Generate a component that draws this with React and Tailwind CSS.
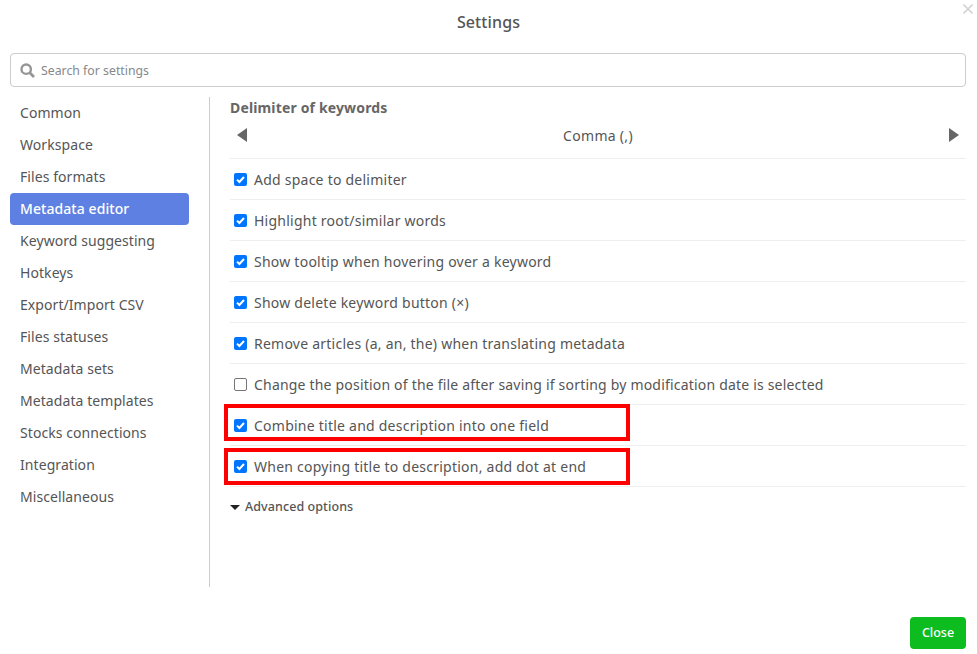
import React from "react";

const menu = ["Common","Workspace","Files formats","Metadata editor","Keyword suggesting","Hotkeys","Export/Import CSV","Files statuses","Metadata sets","Metadata templates","Stocks connections","Integration","Miscellaneous"];
const rows = [
  ["Add space to delimiter", true],
  ["Highlight root/similar words", true],
  ["Show tooltip when hovering over a keyword", true],
  ["Show delete keyword button (×)", true],
  ["Remove articles (a, an, the) when translating metadata", true],
  ["Change the position of the file after saving if sorting by modification date is selected", false],
  ["Combine title and description into one field", true],
  ["When copying title to description, add dot at end", true],
];

function Check({ on }) {
  if (!on) return <span className="w-[13px] h-[13px] rounded-[2px] border border-[#767676] bg-white shrink-0" />;
  return (
    <span className="w-[13px] h-[13px] rounded-[2px] bg-[#0075ff] shrink-0 flex items-center justify-center">
      <svg width="11" height="11" viewBox="0 0 11 11"><path d="M2 5.6 L4.4 8 L9 3" fill="none" stroke="#fff" strokeWidth="2" /></svg>
    </span>
  );
}

export default function App() {
  return (
    <div className="relative w-[977px] h-[654px] bg-white overflow-hidden text-[#555] text-[14px] [font-family:'Noto_Sans',sans-serif]">
      <svg className="absolute left-[963px] top-[4px]" width="10" height="10" viewBox="0 0 10 10"><path d="M0.5 0.5 L9.5 9.5 M9.5 0.5 L0.5 9.5" stroke="#d4d4d4" strokeWidth="1.6" /></svg>
      <div className="h-[53px] pt-[10px] text-center text-[16px] leading-[24px] font-medium tracking-[0.12px] text-[#555]">Settings</div>
      <div className="mx-[10px] w-[956px] h-[34px] border border-[#ccc] rounded-[4px] flex items-center pl-[9px] gap-[6px]">
        <svg width="15" height="15" viewBox="0 0 15 15"><circle cx="6.2" cy="6.2" r="4.7" fill="none" stroke="#969696" strokeWidth="2.4" /><path d="M9.8 9.8 L14 14" stroke="#969696" strokeWidth="2.8" /></svg>
        <span className="text-[12.3px] text-[#888] relative top-px">Search for settings</span>
      </div>
      <div className="flex mt-[10px] pl-[10px]">
        <div className="w-[179px]">
          {menu.map((m) => (
            <div key={m} className={"h-[32px] pl-[10px] pb-[2px] flex items-center rounded-[4px] text-[14px] tracking-[0.07px] " + (m === "Metadata editor" ? "bg-[#5e80e2] text-white font-medium" : "text-[#555]")}>{m}</div>
          ))}
        </div>
        <div className="ml-[20px] w-px h-[490px] bg-[#ccc]" />
        <div className="ml-[20px] w-[736px]">
          <div className="h-[21px] leading-[21px] text-[14px] font-bold tracking-[0.15px] text-[#666]">Delimiter of keywords</div>
          <div className="h-[41px] border-b border-[#eee] flex items-center justify-between pl-[7px] pr-[7px] pb-[6px]">
            <svg width="10" height="14" viewBox="0 0 10 14"><path d="M10 0 V14 L0 7 Z" fill="#666" /></svg>
            <span className="text-[14px] text-[#555] tracking-[0.3px]">Comma (,)</span>
            <svg width="10" height="14" viewBox="0 0 10 14"><path d="M0 0 V14 L10 7 Z" fill="#666" /></svg>
          </div>
          {rows.map(([t, on]) => (
            <div key={t} className={"h-[41px] border-b border-[#eee] flex items-center pl-[4px] gap-[7px] text-[14px] " + (on ? "tracking-[0.24px]" : "tracking-[0.195px]")}>
              <Check on={on} />
              <span>{t}</span>
            </div>
          ))}
          <div className="mt-[11px] flex items-center gap-[5px] text-[12.5px] font-medium leading-[18px] tracking-[0.08px]">
            <svg width="10" height="5" viewBox="0 0 10 5"><path d="M0 0 H10 L5 5 Z" fill="#222" /></svg>
            <span>Advanced options</span>
          </div>
        </div>
      </div>
      <div className="absolute left-[224px] top-[404px] w-[406px] h-[37px] border-4 border-[#f00]" />
      <div className="absolute left-[224px] top-[448px] w-[406px] h-[37px] border-4 border-[#f00]" />
      <button className="absolute left-[910px] top-[617px] w-[56px] h-[32px] rounded-[4px] bg-[#0dbc1f] text-white text-[12.5px] font-medium">Close</button>
    </div>
  );
}
